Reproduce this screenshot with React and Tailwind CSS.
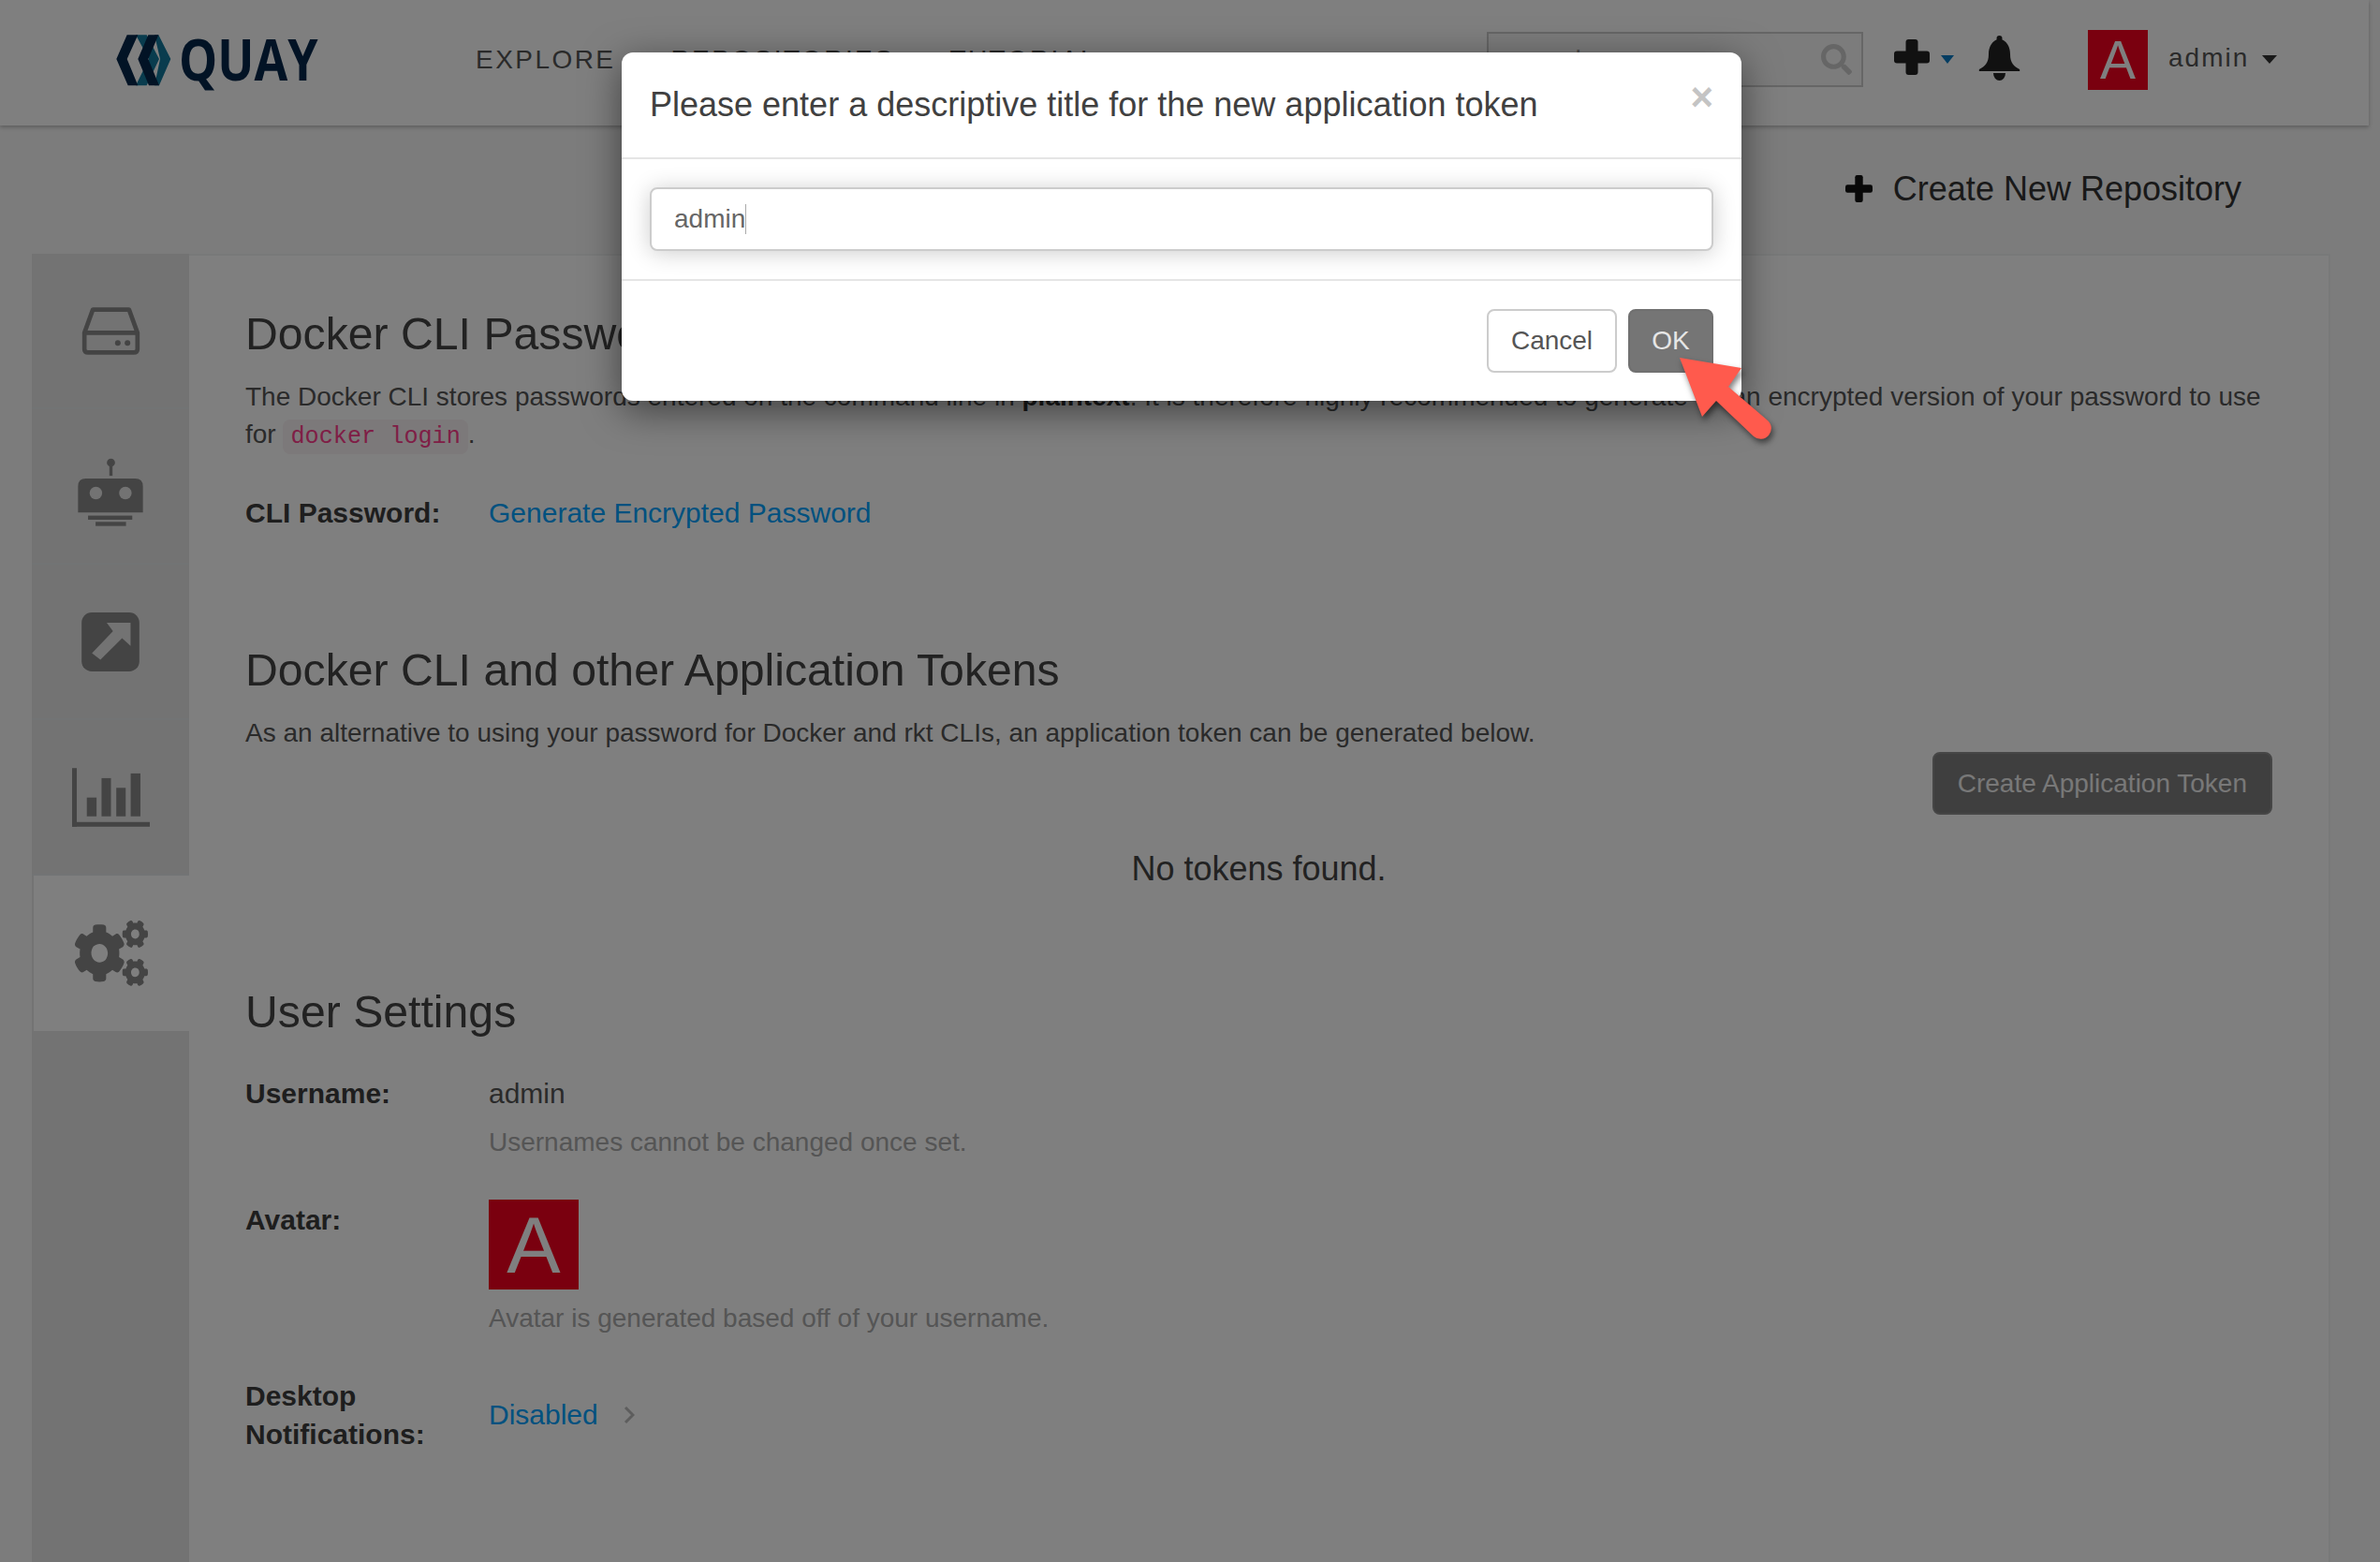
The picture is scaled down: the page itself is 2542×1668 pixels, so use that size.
import React from "react";
import { FaSearch, FaCogs } from "react-icons/fa";

const sans = "font-['Liberation_Sans',Arial,sans-serif]";

function Logo() {
  return (
    <div className="flex items-center w-[214px] h-[62px]">
      <svg width="90" height="75" viewBox="0 0 270 225" className="shrink-0 -ml-[9px] -mt-[4px]">
        <polygon fill="#12799c" points="90,28 125,28 165,105 125,190 90,190 132,105" />
        <polygon fill="#12799c" points="150,28 163,28 202,105 165,190 150,190 168,105" />
        <polygon fill="#05264a" points="62,28 97,28 62,105 97,190 65,190 28,105" />
        <polygon fill="#05264a" points="130,28 163,28 130,105 165,190 132,190 97,105" />
      </svg>
      <span className="-ml-[14px] -mt-[10px] origin-left scale-x-[0.85] text-[61px] leading-none font-bold text-[#05264a] font-['Open_Sans',sans-serif]">QUAY</span>
    </div>
  );
}

function Avatar({ size, text }) {
  return (
    <div className={`${size} ${text} bg-[#f4001e] text-white flex items-center justify-center leading-none`}>A</div>
  );
}

function Plus({ className, t }) {
  return (
    <svg viewBox="0 0 38 38" className={className} fill="currentColor">
      <rect x={19 - t / 2} y="0" width={t} height="38" rx="3" />
      <rect x="0" y={19 - t / 2} width="38" height={t} rx="3" />
    </svg>
  );
}

function Tab({ active, children }) {
  return (
    <div className={active
      ? "h-[166px] ml-[2px] bg-white flex items-center justify-center"
      : "h-[166px] bg-[#e6e6e6] border-b-2 border-[#e4e8ea] flex items-center justify-center"}>
      {children}
    </div>
  );
}

const Label = ({ children }) => <div className="w-[260px] shrink-0 text-[30px] font-bold text-[#3c3c3c]">{children}</div>;
const Heading = ({ children, className }) => <h3 className={`text-[48.2px] leading-[53px] text-[#444] ${className}`}>{children}</h3>;

export default function App() {
  return (
    <div className={`relative w-[2542px] h-[1668px] overflow-hidden bg-[#f8f8f8] text-[28px] leading-[40px] text-[#555] ${sans}`}>
      {/* Nav */}
      <nav className="w-[2530px] h-[134px] bg-white flex items-center shadow-[0_2px_4px_rgba(0,0,0,0.25)]">
        <div className="ml-[124px]"><Logo /></div>
        <div className="ml-[170px] -mt-[6px] flex gap-[59px] tracking-[2.45px] text-[#555]">
          <span>EXPLORE</span><span>REPOSITORIES</span><span>TUTORIAL</span>
        </div>
        <div className="absolute left-[1588px] top-[34px] w-[402px] h-[59px] border-2 border-[#ccc] bg-[#f8f8f8] flex items-center justify-between pl-[24px] pr-[10px] text-[#999]">
          <span>search</span>
          <FaSearch className="w-[33px] h-[33px] text-[#ccc]" />
        </div>
        <Plus t={13} className="absolute left-[2023px] top-[42px] w-[38px] h-[38px] text-[#222]" />
        <span className="absolute left-[2073px] top-[59px] border-x-[7px] border-x-transparent border-t-[9px] border-t-[#0a7bc4]" />
        <svg width="45" height="48" viewBox="0 0 45 48" className="absolute left-[2113px] top-[38px] text-[#222]" fill="currentColor">
          <circle cx="22.5" cy="3" r="3" />
          <path d="M22.5 3 C31 6 34 12 34 20 C34 29 38 33 44 36 Q45 38 43 38 H2 Q0 38 1 36 C7 33 11 29 11 20 C11 12 14 6 22.5 3 Z" />
          <path d="M16 40 H29 A6.5 8 0 0 1 16 40 Z" />
        </svg>
        <div className="absolute left-[2230px] top-[32px]"><Avatar size="w-[64px] h-[64px]" text="text-[57px]" /></div>
        <span className="absolute left-[2316px] top-[42px] tracking-[2px] text-[#555]">admin</span>
        <span className="absolute left-[2416px] top-[59px] border-x-[8px] border-x-transparent border-t-[9px] border-t-[#333]" />
      </nav>

      {/* Create row */}
      <div className="h-[137px] pb-[2px] flex items-center justify-end pr-[148px] text-[36px] text-[#333]">
        <Plus t={11} className="w-[29px] h-[29px] mr-[22px] text-[#111]" />
        <span>Create New Repository</span>
      </div>

      {/* Panel */}
      <div className="ml-[34px] w-[2455px] h-[1397px] flex bg-white border-r-2 border-[#f0f2f3]">
        <div className="w-[168px] shrink-0 bg-[#e6e6e6]">
          <Tab>
            <svg width="67" height="55" viewBox="165 170 200 165" className="text-[#888]">
              <path d="M180 258 L207 184 H323 L350 258 V310 Q350 321 338 321 H192 Q180 321 180 310 Z M180 258 H350" fill="none" stroke="currentColor" strokeWidth="14" strokeLinejoin="round" />
              <circle cx="287" cy="291" r="9" fill="currentColor" />
              <circle cx="318" cy="291" r="9" fill="currentColor" />
            </svg>
          </Tab>
          <Tab>
            <svg width="77" height="77" viewBox="150 655 230 230" className="text-[#888] mt-[12px]">
              <circle cx="265" cy="676" r="13" fill="currentColor" />
              <rect x="260" y="676" width="10" height="42" fill="currentColor" />
              <path d="M160 752 Q160 727 185 727 H342 Q367 727 367 752 V835 H160 Z" fill="currentColor" />
              <circle cx="217" cy="773" r="20" fill="#e6e6e6" />
              <circle cx="311" cy="773" r="20" fill="#e6e6e6" />
              <rect x="192" y="845" width="141" height="13" fill="currentColor" />
              <rect x="216" y="865" width="97" height="13" fill="currentColor" />
            </svg>
          </Tab>
          <Tab>
            <svg width="62" height="63" viewBox="172 165 184 188" className="text-[#888]">
              <rect x="172" y="165" width="184" height="188" rx="32" fill="currentColor" />
              <polygon points="252,198 328,198 328,272 301,247 232,316 205,295 272,225" fill="#e6e6e6" />
            </svg>
          </Tab>
          <Tab>
            <svg width="83" height="63" viewBox="140 663 248 187" className="text-[#888]" fill="currentColor">
              <rect x="140" y="663" width="15" height="187" />
              <rect x="140" y="835" width="248" height="15" />
              <rect x="187" y="757" width="31" height="60" />
              <rect x="234" y="695" width="30" height="122" />
              <rect x="281" y="726" width="30" height="91" />
              <rect x="327" y="680" width="31" height="137" />
            </svg>
          </Tab>
          <Tab active>
            <FaCogs className="w-[78px] h-[70px] text-[#888]" preserveAspectRatio="none" />
          </Tab>
        </div>

        <div className="flex-1 border-t-2 border-[#f0f2f3] pl-[60px] pr-[60px] pt-[57px]">
          <Heading>Docker CLI Password</Heading>
          <p className="mt-[21px]">
            The Docker CLI stores passwords entered on the command line in <b className="text-[#333]">plaintext</b>. It is therefore highly recommended to generate <span className="ml-[39px]">an encrypted version of your password to use</span> for <code className="px-[8px] py-[4px] rounded-[8px] bg-[#f9f2f4] text-[#ff3c8c] text-[25.2px] font-['Liberation_Mono',monospace]">docker login</code>.
          </p>
          <div className="mt-[41px] flex text-[30px]">
            <Label>CLI Password:</Label>
            <a className="text-[#00a2ff]">Generate Encrypted Password</a>
          </div>

          <Heading className="mt-[121px]">Docker CLI and other Application Tokens</Heading>
          <p className="mt-[21px]">As an alternative to using your password for Docker and rkt CLIs, an application token can be generated below.</p>
          <div className="flex justify-end">
            <button className="h-[67px] px-[25px] rounded-[8px] bg-[#7e7e7e] border-2 border-[#8c8c8c] text-[#f0f0f0]">Create Application Token</button>
          </div>
          <div className="mt-[32px] text-center text-[36px] leading-[51px] text-[#444]">No tokens found.</div>

          <Heading className="mt-[101px]">User Settings</Heading>
          <div className="mt-[41px] flex text-[30px]">
            <Label>Username:</Label>
            <div>admin</div>
          </div>
          <div className="mt-[12px] ml-[260px] text-[#aaa]">Usernames cannot be changed once set.</div>

          <div className="mt-[41px] flex">
            <div className="pt-[2px]"><Label>Avatar:</Label></div>
            <Avatar size="w-[96px] h-[96px]" text="text-[86px]" />
          </div>
          <div className="mt-[11px] ml-[260px] text-[#aaa]">Avatar is generated based off of your username.</div>

          <div className="mt-[42px] flex items-center text-[30px]">
            <Label><div className="leading-[41px]">Desktop<br />Notifications:</div></Label>
            <a className="text-[#00a2ff]">Disabled</a>
            <svg width="12" height="18" viewBox="0 0 12 18" className="ml-[27px] text-[#bbb]">
              <path d="M2 1 L10 9 L2 17" fill="none" stroke="currentColor" strokeWidth="3" />
            </svg>
          </div>
        </div>
      </div>

      {/* Backdrop */}
      <div className="absolute inset-0 bg-black/50" />

      {/* Modal */}
      <div className="absolute left-[664px] top-[56px] w-[1196px] h-[372px] rounded-[12px] bg-white shadow-[0_10px_40px_rgba(0,0,0,0.5)] flex flex-col">
        <div className="relative h-[114px] border-b-2 border-[#e5e5e5] pl-[30px] flex items-center text-[36px] text-[#404040]">
          <span>Please enter a descriptive title for the new application token</span>
          <span className="absolute right-[30px] top-[24px] text-[42px] leading-[48px] font-bold text-[#c4c4c4]">×</span>
        </div>
        <div className="h-[130px] border-b-2 border-[#e5e5e5] px-[30px] pt-[30px]">
          <div className="h-[68px] rounded-[8px] border-2 border-[#ccc] bg-white shadow-[0_2px_24px_rgba(0,0,0,0.2)] flex items-center pl-[24px] text-[#666]">
            admin<span className="w-px h-[32px] bg-[#aaa]" />
          </div>
        </div>
        <div className="flex justify-end gap-[12px] pr-[30px] pt-[30px]">
          <button className="h-[68px] w-[139px] rounded-[8px] border-2 border-[#ccc] bg-white text-[#555]">Cancel</button>
          <button className="h-[68px] w-[91px] rounded-[8px] border-2 border-[#707070] bg-[#757575] text-[#e6e6e6]">OK</button>
        </div>
      </div>

      {/* Annotation arrow */}
      <svg className="absolute left-[1780px] top-[370px] drop-shadow-[2px_4px_3px_rgba(0,0,0,0.5)]" width="120" height="110" viewBox="1780 370 120 110">
        <path d="M1794 382 L1860 393 L1846 413 L1888 449 A11 11 0 0 1 1873 466 L1833 428 L1818 445 Z" fill="#ff5a4d" />
      </svg>
    </div>
  );
}
